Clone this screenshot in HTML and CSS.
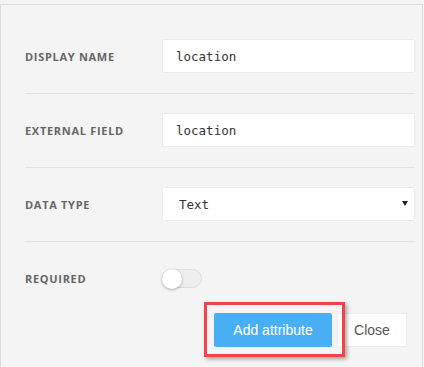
FILE: index.html
```html
<!DOCTYPE html>
<html lang="en">
<head>
    <meta charset="UTF-8">
    <title>Add Attribute</title>
    <link rel="stylesheet" href="styles.css">
</head>
<body>
    <div class="panel">
        <div class="row">
            <label class="label" for="display-name">Display name</label>
            <input class="field" type="text" id="display-name" value="location">
        </div>
        <div class="row">
            <label class="label" for="external-field">External field</label>
            <input class="field" type="text" id="external-field" value="location">
        </div>
        <div class="row">
            <label class="label" for="data-type">Data type</label>
            <div class="select-wrap">
                <select class="field select" id="data-type">
                    <option>Text</option>
                </select>
            </div>
        </div>
        <div class="row last">
            <span class="label">Required</span>
            <span class="toggle"><span class="knob"></span></span>
        </div>
        <div class="actions">
            <div class="highlight-wrap">
                <button class="btn btn-primary">Add attribute</button>
                <span class="highlight"></span>
            </div>
            <button class="btn btn-default">Close</button>
        </div>
    </div>
</body>
</html>
```

FILE: styles.css
```css
/* Global */
body {
    margin: 0;
    padding: 0;
    background: #f4f4f4;
    font-family: 'Open Sans', sans-serif;
}

.panel {
    margin: 4px 1px 0 0;
    padding: 15px 7px 20px 24px;
    background: #f4f4f4;
    border: 1px solid #dcdcdc;
    border-bottom: none;
    min-height: 340px;
}

/* Form rows */
.row {
    display: grid;
    grid-template-columns: 137px 1fr;
    align-items: center;
    min-height: 34px;
    padding: 19px 0 20px;
    border-bottom: 1px solid #e2e2e2;
}

.row.last {
    border-bottom: none;
    padding-bottom: 0;
}

.label {
    font-size: 11px;
    font-weight: 700;
    text-transform: uppercase;
    color: #666;
    letter-spacing: 0.7px;
}

.field {
    box-sizing: border-box;
    width: 100%;
    height: 34px;
    padding: 0 13px;
    border: 1px solid #ebebeb;
    border-radius: 2px;
    background: #fff;
    font-family: 'DejaVu Sans Mono', monospace;
    font-size: 12.5px;
    color: #333;
    outline: none;
}

.select-wrap {
    position: relative;
}

.select {
    appearance: none;
    -webkit-appearance: none;
    padding-left: 16px;
}

.select-wrap::after {
    content: '';
    position: absolute;
    right: 7px;
    top: 14px;
    border-left: 3px solid transparent;
    border-right: 3px solid transparent;
    border-top: 5px solid #222;
}

/* Toggle */
.toggle {
    position: relative;
    display: block;
    width: 40px;
    height: 19px;
    box-sizing: border-box;
    border: 1px solid #dedede;
    border-radius: 10px;
    background: #eee;
}

.knob {
    position: absolute;
    left: -1px;
    top: -1px;
    width: 20px;
    height: 20px;
    border-radius: 50%;
    background: #fff;
    box-shadow: 0 1px 3px rgba(0, 0, 0, 0.3);
}

/* Actions */
.actions {
    display: flex;
    justify-content: flex-end;
    gap: 5px;
    margin-top: 18px;
    padding-right: 8px;
}

.highlight-wrap {
    position: relative;
}

.btn {
    height: 34px;
    border-radius: 2px;
    font-family: 'Liberation Sans', Arial, sans-serif;
    font-size: 14px;
    cursor: pointer;
}

.btn-primary {
    width: 118px;
    border: none;
    background: #48aff5;
    color: #fff;
}

.btn-default {
    width: 70px;
    border: 1px solid #ececec;
    background: #fff;
    color: #555;
}

.highlight {
    position: absolute;
    left: -10px;
    top: -11px;
    right: -13px;
    bottom: -10px;
    border: 3px solid #f0444a;
    box-shadow: 2px 2px 4px rgba(0, 0, 0, 0.35);
    pointer-events: none;
}
```
